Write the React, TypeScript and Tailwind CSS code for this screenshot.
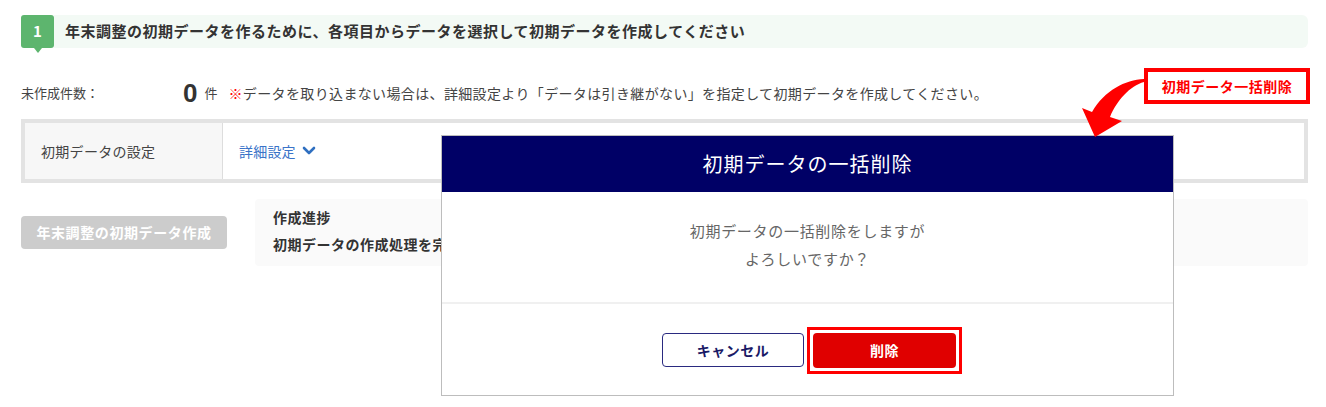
import { ReactNode } from 'react';

function StepHeader({ step, children }: { step: number; children: ReactNode }) {
  return (
    <div className="flex h-[33px]">
      <div className="relative flex w-[33px] items-center justify-center rounded-[3px] bg-[#5db56e] text-[15px] font-bold text-white">
        {step}
        <span className="absolute left-[13px] top-[33px] h-0 w-0 border-x-[4px] border-t-[5px] border-x-transparent border-t-[#5db56e]" />
      </div>
      <div className="flex flex-1 items-center rounded-r-[6px] bg-[#f3faf5] pl-[11px] text-[15px] font-bold tracking-[0.5px] text-[#333]">
        {children}
      </div>
    </div>
  );
}

function ChevronDown() {
  return (
    <svg width="14" height="10" viewBox="0 0 14 10" className="ml-[6px]">
      <polyline
        points="2,2 7,7 12,2"
        fill="none"
        stroke="#2f6fc0"
        strokeWidth="2.6"
        strokeLinecap="round"
        strokeLinejoin="round"
      />
    </svg>
  );
}

function CurvedArrow() {
  return (
    <svg
      width="75"
      height="70"
      viewBox="0 0 75 70"
      className="absolute left-[1075px] top-[70px]"
    >
      <path
        d="M69,9 C50,10 30,20 17,42 L7,38 L20,67 L47,51 L35,47 C42,30 55,16 69,12 Z"
        fill="#ff0000"
      />
    </svg>
  );
}

function ConfirmDialog() {
  return (
    <div className="absolute left-[441px] top-[135px] flex h-[261px] w-[733px] flex-col border border-[#bdbdbd] bg-white">
      <div className="flex h-[56px] items-center justify-center bg-[#000066] text-[20px] tracking-[1px] text-white">
        初期データの一括削除
      </div>
      <div className="h-[110px] pt-[25px] text-center text-[15px] leading-[28px] tracking-[0.7px] text-[#666]">
        <p>初期データの一括削除をしますが</p>
        <p>よろしいですか？</p>
      </div>
      <div className="flex flex-1 items-start border-t-2 border-[#f0f0f0] pl-[220px] pt-[23px]">
        <button className="mt-[6px] flex h-[34px] w-[142px] items-center justify-center rounded-[4px] border border-[#2a2a80] bg-white text-[14px] font-bold tracking-[0.5px] text-[#1a1a66]">
          キャンセル
        </button>
        <div className="ml-[3px] border-[3px] border-[#ff0000] p-[3px]">
          <button className="flex h-[35px] w-[143px] items-center justify-center rounded-[4px] bg-[#e00000] text-[14px] font-bold tracking-[0.5px] text-white">
            削除
          </button>
        </div>
      </div>
    </div>
  );
}

export default function App() {
  return (
    <div className="relative h-[407px] w-[1326px] overflow-hidden bg-white font-['Noto_Sans_CJK_JP',sans-serif] text-[#333]">
      <div className="pl-[21px] pr-[18px] pt-[15px]">
        <StepHeader step={1}>
          年末調整の初期データを作るために、各項目からデータを選択して初期データを作成してください
        </StepHeader>

        <div className="mt-[33px] flex h-[24px] items-center">
          <span className="w-[162px] text-[13px] text-[#444]">未作成件数：</span>
          <span className="font-['Liberation_Sans',sans-serif] text-[26px] font-bold leading-none text-[#333]">
            0
          </span>
          <span className="ml-[7px] text-[13px] text-[#444]">件</span>
          <span className="ml-[11px] text-[14px] tracking-[0.36px] text-[#444]">
            <span className="font-bold text-[#ff0000]">※</span>
            データを取り込まない場合は、詳細設定より「データは引き継がない」を指定して初期データを作成してください。
          </span>
        </div>

        <div className="mt-[14px] flex h-[64px] border-4 border-[#e3e3e3]">
          <div className="flex w-[198px] items-center border-r border-[#dddddd] bg-[#f7f7f7] pl-[16px] text-[14px] tracking-[0.3px] text-[#444]">
            初期データの設定
          </div>
          <div className="flex flex-1 items-center pl-[16px] text-[14px] tracking-[0.2px] text-[#3a73c8]">
            詳細設定
            <ChevronDown />
          </div>
        </div>

        <div className="mt-[16px] flex">
          <button className="mt-[17px] flex h-[33px] w-[206px] items-center justify-center rounded-[4px] bg-[#cccccc] text-[14px] font-bold tracking-[0.6px] text-white">
            年末調整の初期データ作成
          </button>
          <div className="ml-[28px] h-[67px] flex-1 rounded-[4px] bg-[#fafafa] pl-[18px] pt-[5px] text-[14px] font-bold leading-[27px] tracking-[0.5px] text-[#333]">
            <p>作成進捗</p>
            <p>初期データの作成処理を完了しました。</p>
          </div>
        </div>
      </div>

      <ConfirmDialog />

      <div className="absolute left-[1144px] top-[68px] flex h-[36px] w-[166px] items-center justify-center border-4 border-[#ff0000] bg-white text-[14px] font-bold tracking-[0.5px] text-[#ff0000]">
        初期データ一括削除
      </div>
      <CurvedArrow />
    </div>
  );
}
